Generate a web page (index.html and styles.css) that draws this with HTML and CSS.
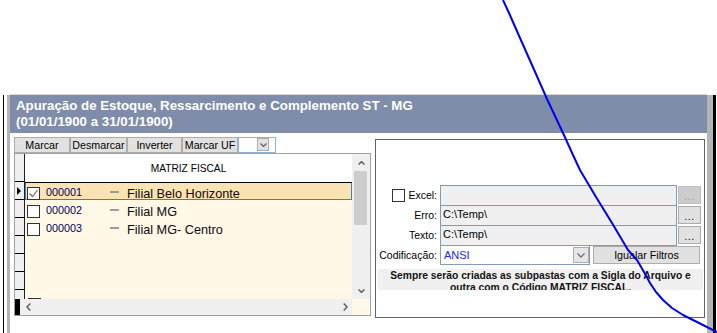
FILE: index.html
```html
<!DOCTYPE html>
<html lang="pt-BR">
<head>
    <meta charset="UTF-8">
    <title>Apuração de Estoque</title>
    <link rel="stylesheet" href="styles.css">
</head>
<body>
    <div class="top-space"></div>
    <div class="frame">
        <div class="form">
            <div class="form-title">Apuração de Estoque, Ressarcimento e Complemento ST - MG<br>(01/01/1900 a 31/01/1900)</div>
            <div class="form-body">
                <div class="left-col">
                    <div class="toolbar">
                        <button class="tb-btn w56">Marcar</button>
                        <button class="tb-btn w57">Desmarcar</button>
                        <button class="tb-btn w55">Inverter</button>
                        <button class="tb-btn w56">Marcar UF</button>
                        <div class="tb-combo">
                            <span class="tb-combo-btn"><svg width="7" height="4" viewBox="0 0 7 4"><polyline points="0.5,0.5 3.5,3.5 6.5,0.5" fill="none" stroke="#606060" stroke-width="1.2"/></svg></span>
                        </div>
                    </div>
                    <div class="grid">
                        <div class="grid-main">
                            <div class="rows">
                                <div class="row row-head">
                                    <div class="ind"></div>
                                    <div class="head-cell">MATRIZ FISCAL</div>
                                </div>
                                <div class="row row-focus">
                                    <div class="ind"><span class="arrow"></span></div>
                                    <div class="cells">
                                        <span class="cb"><svg width="11" height="11" viewBox="0 0 11 11"><polyline points="1.5,5.5 4.5,8.5 9.5,2" fill="none" stroke="#707070" stroke-width="1.2"/></svg></span>
                                        <span class="code">000001</span>
                                        <span class="dash"></span>
                                        <span class="name">Filial Belo Horizonte</span>
                                    </div>
                                </div>
                                <div class="row">
                                    <div class="ind"></div>
                                    <div class="cells">
                                        <span class="cb"></span>
                                        <span class="code">000002</span>
                                        <span class="dash"></span>
                                        <span class="name">Filial MG</span>
                                    </div>
                                </div>
                                <div class="row">
                                    <div class="ind"></div>
                                    <div class="cells">
                                        <span class="cb"></span>
                                        <span class="code">000003</span>
                                        <span class="dash"></span>
                                        <span class="name">Filial MG- Centro</span>
                                    </div>
                                </div>
                                <div class="row"><div class="ind"></div><div class="cells"></div></div>
                                <div class="row"><div class="ind"></div><div class="cells"></div></div>
                                <div class="row"><div class="ind"></div><div class="cells"></div></div>
                                <div class="row"><div class="ind"></div><div class="cells"><span class="cb-edge"></span></div></div>
                            </div>
                            <div class="vscroll">
                                <div class="vs-btn"><svg width="7" height="4" viewBox="0 0 7 4"><polyline points="0.5,3.5 3.5,0.7 6.5,3.5" fill="none" stroke="#606060" stroke-width="1.5"/></svg></div>
                                <div class="vs-thumb"></div>
                                <div class="vs-fill"></div>
                                <div class="vs-btn"><svg width="7" height="4" viewBox="0 0 7 4"><polyline points="0.5,0.5 3.5,3.3 6.5,0.5" fill="none" stroke="#606060" stroke-width="1.5"/></svg></div>
                            </div>
                        </div>
                        <div class="hscroll">
                            <div class="hs-mark"></div>
                            <div class="hs-track">
                                <svg width="5" height="8" viewBox="0 0 5 8"><polyline points="4.3,0.5 1,4 4.3,7.5" fill="none" stroke="#606060" stroke-width="1.5"/></svg>
                                <svg width="5" height="8" viewBox="0 0 5 8"><polyline points="0.7,0.5 4,4 0.7,7.5" fill="none" stroke="#606060" stroke-width="1.5"/></svg>
                            </div>
                            <div class="hs-corner"></div>
                        </div>
                    </div>
                </div>

                <div class="export-panel">
                    <div class="path-grid">
                        <label class="lbl"><span class="cb cb-excel"></span>Excel:</label>
                        <div class="path-input"></div>
                        <button class="dots-btn disabled">...</button>

                        <label class="lbl">Erro:</label>
                        <div class="path-input">C:\Temp\</div>
                        <button class="dots-btn">...</button>

                        <label class="lbl">Texto:</label>
                        <div class="path-input">C:\Temp\</div>
                        <button class="dots-btn">...</button>
                    </div>
                    <div class="enc-row">
                        <span class="lbl">Codificação:</span>
                        <div class="combo">
                            <span class="combo-text">ANSI</span>
                            <span class="combo-btn"><svg width="8" height="5" viewBox="0 0 8 5"><polyline points="0.5,0.5 4,4 7.5,0.5" fill="none" stroke="#606060" stroke-width="1.1"/></svg></span>
                        </div>
                        <button class="plain-btn">Igualar Filtros</button>
                    </div>
                    <div class="note">Sempre serão criadas as subpastas com a Sigla do Arquivo e<br>outra com o Código MATRIZ FISCAL.</div>
                </div>
            </div>
        </div>
    </div>

    <svg class="annotation" width="717" height="333" viewBox="0 0 717 333">
        <polyline points="503,0 509,13 520,38 532,65 547,99 563,133 573,155 580,170 596,197 612,223 628,250 637,260 644,272 650,283 656,292 663,300 672,308 683,315 693,320 703,325 717,332" fill="none" stroke="#0000f0" stroke-width="2" stroke-linejoin="round"/>
    </svg>
</body>
</html>
```

FILE: styles.css
```css
body {
    margin: 0;
    background: #fff;
    font-family: "Liberation Sans", Arial, sans-serif;
    font-size: 11px;
    color: #000;
    overflow: hidden;
}
button {
    font-family: inherit;
    color: #000;
    padding: 0;
    box-sizing: border-box;
}
.top-space {
    height: 95px;
}
.frame {
    height: 238px;
    margin: 0 1px 0 3px;
    padding-left: 3px;
    border-left: 1px solid #000;
    border-right: 3px solid #000;
}
.form {
    height: 100%;
    border-left: 3px solid #b4b4b4;
    border-right: 6px solid #b4b4b4;
}
.form-title {
    height: 38px;
    box-sizing: border-box;
    padding: 3px 6px;
    background: #7f8daa;
    color: #fff;
    font-weight: bold;
    font-size: 13.3px;
    line-height: 16px;
    box-shadow: 0 -1px 0 #d8d8d8;
}
.form-body {
    display: flex;
    align-items: flex-start;
    gap: 4px;
    padding: 4px 0 0 4px;
}
.left-col {
    width: 357px;
}

/* toolbar */
.toolbar {
    display: flex;
    height: 16px;
}
.tb-btn {
    height: 16px;
    border: 1px solid #adadad;
    background: #e1e1e1;
    font-size: 10.7px;
    line-height: 14px;
}
.w55 { width: 55px; }
.w56 { width: 56px; }
.w57 { width: 57px; }
.tb-combo {
    width: 38px;
    height: 16px;
    box-sizing: border-box;
    border: 1px solid #8fb2d6;
    background: #fff;
}
.tb-combo-btn {
    display: flex;
    align-items: center;
    justify-content: center;
    width: 12px;
    height: 13px;
    box-sizing: border-box;
    margin-left: 18px;
    border: 1px solid #adadad;
    background: #e1e1e1;
}

/* grid */
.grid {
    border: 1px solid #a0a0a0;
}
.grid-main {
    display: flex;
    height: 145px;
}
.rows {
    width: 337px;
    overflow: hidden;
    background: #fff8e6;
}
.row {
    display: flex;
    height: 18px;
}
.row-head {
    height: 28px;
}
.ind {
    position: relative;
    flex: none;
    width: 9px;
    background: #f0f0f0;
    border-right: 1px solid #202020;
    border-bottom: 1px solid #000;
}
.arrow {
    position: absolute;
    left: 2px;
    top: 5px;
    border-left: 4px solid #000;
    border-top: 4px solid transparent;
    border-bottom: 4px solid transparent;
}
.head-cell {
    flex: 1;
    background: #fff;
    text-align: center;
    font-size: 10.2px;
    line-height: 26px;
    padding-top: 2px;
}
.cells {
    flex: 1;
    display: flex;
    align-items: flex-start;
}
.row-focus .cells {
    background: #fbe3b3;
    box-shadow: inset 0 1px #000, inset 1px 0 #3c7fd1, inset -1px -1px #3c7fd1;
}
.cb {
    flex: none;
    display: block;
    width: 13px;
    height: 13px;
    box-sizing: border-box;
    margin: 5px 0 0 2px;
    border: 1px solid #333;
    background: #fff;
}
.cb svg {
    display: block;
}
.code {
    flex: none;
    width: 64px;
    margin-left: 6px;
    padding-top: 1px;
    font-size: 10.8px;
    line-height: 18px;
    color: #000060;
}
.dash {
    flex: none;
    width: 9px;
    height: 2px;
    margin-top: 9px;
    background: #9c9c9c;
}
.name {
    margin-left: 8px;
    padding-top: 2.5px;
    font-size: 12.7px;
    line-height: 18px;
    color: #100810;
    white-space: nowrap;
}
.cb-edge {
    width: 13px;
    height: 1px;
    margin: 8px 0 0 3px;
    background: #333;
}
.vscroll {
    width: 18px;
    display: flex;
    flex-direction: column;
    background: #f0f0f0;
}
.vs-btn {
    height: 17px;
    display: flex;
    align-items: center;
    justify-content: center;
}
.vs-thumb {
    height: 54px;
    margin: 0 3px 0 2px;
    background: #cdcdcd;
}
.vs-fill {
    flex: 1;
}
.hscroll {
    display: flex;
    height: 16px;
}
.hs-mark {
    width: 5px;
    background: #000;
}
.hs-track {
    width: 332px;
    box-sizing: border-box;
    padding: 0 4px 0 6px;
    display: flex;
    align-items: center;
    justify-content: space-between;
    background: #f0f0f0;
}
.hs-corner {
    flex: 1;
    background: #fff8e6;
}

/* export panel */
.export-panel {
    width: 330px;
    height: 179px;
    box-sizing: border-box;
    margin-top: 2px;
    border: 1px solid #646464;
    background: #fff;
}
.path-grid {
    display: grid;
    grid-template-columns: 64px 237px 24px;
    grid-auto-rows: 20px;
    margin-top: 45px;
}
.lbl {
    display: flex;
    align-items: center;
    justify-content: flex-end;
    width: 64px;
    box-sizing: border-box;
    padding-right: 3px;
    font-size: 10.5px;
    line-height: 20px;
}
.cb-excel {
    margin: 0 3px 0 0;
}
.path-input {
    height: 21px;
    box-sizing: border-box;
    padding-left: 2px;
    border: 1px solid #7f9db9;
    background: #f0f0f0;
    font-size: 11px;
    line-height: 17px;
}
.dots-btn {
    width: 23px;
    height: 18px;
    margin: 1px 0 0 1px;
    padding-top: 2px;
    border: 1px solid #adadad;
    background: #e1e1e1;
    font-size: 11px;
    line-height: 14px;
    color: #000050;
    letter-spacing: 0.5px;
}
.dots-btn.disabled {
    background: #cccccc;
    border-color: #bfbfbf;
    color: #9a9ab8;
}
.enc-row {
    display: flex;
    height: 20px;
}
.combo {
    display: flex;
    width: 150px;
    height: 20px;
    box-sizing: border-box;
    border: 1px solid #7f9db9;
    background: #fff;
}
.combo-text {
    flex: 1;
    padding-left: 3px;
    font-size: 11px;
    line-height: 18px;
    color: #2323ff;
}
.combo-btn {
    display: flex;
    align-items: center;
    justify-content: center;
    width: 16px;
    height: 16px;
    box-sizing: border-box;
    margin-top: 1px;
    border: 1px solid #adadad;
    background: #e6e6e6;
}
.plain-btn {
    width: 107px;
    height: 18px;
    margin: 1px 0 0 3px;
    border: 1px solid #adadad;
    background: #e1e1e1;
    font-size: 10.7px;
    line-height: 16px;
}
.note {
    height: 21px;
    box-sizing: border-box;
    margin: 4px 1px 0 2px;
    padding-top: 1px;
    overflow: hidden;
    background: #f0f0f0;
    text-align: center;
    font-weight: bold;
    font-size: 10.3px;
    line-height: 12px;
    color: #141414;
}
.annotation {
    position: absolute;
    left: 0;
    top: 0;
    pointer-events: none;
}
```
